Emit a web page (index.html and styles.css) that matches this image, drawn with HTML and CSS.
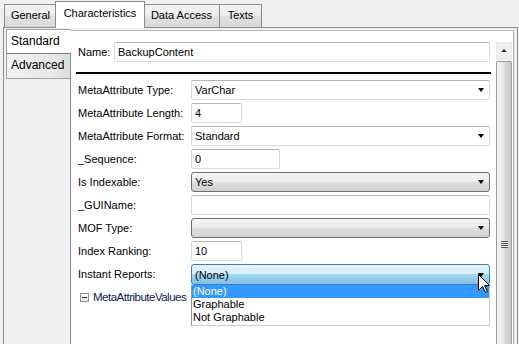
FILE: index.html
```html
<!DOCTYPE html>
<html lang="en">
<head>
    <meta charset="UTF-8">
    <title>Characteristics</title>
    <link rel="stylesheet" href="styles.css">
</head>
<body>
    <div class="tabs">
        <div class="tab tab-general">General</div>
        <div class="tab tab-active">Characteristics</div>
        <div class="tab tab-data">Data Access</div>
        <div class="tab tab-texts">Texts</div>
    </div>

    <div class="panel">
        <div class="side">
            <div class="vtab vtab-active">Standard</div>
            <div class="vtab">Advanced</div>
        </div>

        <div class="content">
            <div class="form">
                <div class="name-row">
                    <span class="name-label">Name:</span>
                    <div class="field name-field">BackupContent</div>
                </div>
                <div class="rule"></div>

                <div class="grid">
                    <span>MetaAttribute Type:</span>
                    <div class="field combo">VarChar<span class="arrow"></span></div>

                    <span>MetaAttribute Length:</span>
                    <div class="field short">4</div>

                    <span>MetaAttribute Format:</span>
                    <div class="field combo">Standard<span class="arrow"></span></div>

                    <span>_Sequence:</span>
                    <div class="field medium">0</div>

                    <span>Is Indexable:</span>
                    <div class="button-combo">Yes<span class="arrow"></span></div>

                    <span>_GUIName:</span>
                    <div class="field"></div>

                    <span>MOF Type:</span>
                    <div class="button-combo"><span></span><span class="arrow"></span></div>

                    <span>Index Ranking:</span>
                    <div class="field short">10</div>

                    <span>Instant Reports:</span>
                    <div class="dd-wrap">
                        <div class="button-combo hot">(None)<span class="arrow"></span></div>
                        <ul class="dropdown">
                            <li class="selected">(None)</li>
                            <li>Graphable</li>
                            <li>Not Graphable</li>
                        </ul>
                        <!-- mouse pointer -->
                        <svg class="cursor" width="13" height="20" viewBox="0 0 13 20">
                            <path d="M0.5 0.5 L0.5 16.5 L4.5 12.5 L7.5 18.5 L9.5 17.5 L6.5 11.5 L11.5 11.5 Z" fill="#fff" stroke="#000" stroke-width="1"/>
                        </svg>
                    </div>
                </div>

                <div class="group">
                    <span class="expander"></span>
                    <span class="group-title">MetaAttributeValues</span>
                </div>
            </div>

            <div class="scrollbar">
                <div class="sb-up"><span class="sb-arrow"></span></div>
                <div class="sb-thumb"><div class="grip"></div></div>
            </div>
        </div>
    </div>
</body>
</html>
```

FILE: styles.css
```css
html, body {
    margin: 0;
    height: 100%;
    overflow: hidden;
}

body {
    font-family: 'Liberation Sans', Arial, sans-serif;
    font-size: 11px;
    color: #000;
    background: #f0f0f0;
}

/* top tab strip */
.tabs {
    display: flex;
    align-items: flex-end;
    height: 27px;
    padding-left: 4px;
    box-sizing: border-box;
}

.tab {
    height: 23px;
    line-height: 21px;
    text-align: center;
    border: 1px solid #898c95;
    border-bottom: none;
    border-right: none;
    box-sizing: border-box;
    background: linear-gradient(#f3f3f3, #ececec 50%, #e1e1e1 50%, #d9d9d9);
}

.tab-general {
    width: 52px;
}

.tab-data {
    width: 75px;
}

.tab-texts {
    width: 43px;
    border-right: 1px solid #898c95;
}

.tab-active {
    position: relative;
    z-index: 2;
    width: 90px;
    height: 27px;
    line-height: 22px;
    margin: 0 -1px -1px -1px;
    background: #fff;
    border-right: 1px solid #898c95;
}

.tab-active + .tab {
    border-left: none;
}

/* main panel */
.panel {
    display: flex;
    margin-left: 3px;
    width: 515px;
    height: 330px;
    box-sizing: border-box;
    padding: 0 4px 0 2px;
    border: 1px solid #898c95;
    border-bottom: none;
    background: #f0f0f0;
}

.side {
    width: 64px;
    flex-shrink: 0;
    padding-top: 1px;
}

.vtab {
    height: 25px;
    line-height: 23px;
    padding-left: 4px;
    border-left: 1px solid #a0a0a0;
    border-bottom: 1px solid #a0a0a0;
    box-sizing: border-box;
    background: linear-gradient(to right, #f2f2f2, #e8e8e8 70%, #dcdcdc);
    font-size: 12px;
}

.vtab-active {
    position: relative;
    z-index: 1;
    margin-right: -1px;
    height: 25px;
    border-top: 1px solid #a0a0a0;
    border-bottom: 1px solid #7a7a7a;
    background: #fff;
}

.content {
    flex: 1;
    display: flex;
    margin-top: 2px;
    background: #fff;
    border-left: 1px solid #8a8a8a;
    border-top: 1px solid #b8b8b8;
    border-right: 1px solid #a8a8a8;
}

.form {
    flex: 1;
    padding: 11px 5px 0 7px;
    position: relative;
}

.name-row {
    display: flex;
    align-items: center;
}

.name-label {
    width: 36px;
}

.name-field {
    width: 376px;
}

.rule {
    margin: 10px 0 0 -2px;
    width: 415px;
    height: 2px;
    background: #000;
}

/* editors */
.grid {
    display: grid;
    grid-template-columns: 113px 299px;
    grid-auto-rows: 20px;
    row-gap: 3px;
    align-items: center;
    margin-top: 6px;
}

.field {
    height: 20px;
    line-height: 18px;
    padding-left: 3px;
    box-sizing: border-box;
    border: 1px solid #d6d9de;
    border-top-color: #b2b5bb;
    border-radius: 2px;
    background: #fff;
}

.short {
    width: 51px;
}

.medium {
    width: 89px;
}

.combo,
.button-combo {
    display: flex;
    justify-content: space-between;
    align-items: center;
    padding-right: 5px;
}

.button-combo {
    height: 20px;
    box-sizing: border-box;
    padding-left: 3px;
    border: 1px solid #707070;
    border-radius: 3px;
    background: linear-gradient(#f4f4f4, #ebebeb 50%, #dedede 50%, #d2d2d2);
}

.button-combo.hot {
    height: 21px;
    border-color: #3c7fb1;
    background: linear-gradient(#e8f5fc, #d4eefb 50%, #a6d7f1 50%, #7ec0e3);
}

.arrow {
    width: 0;
    height: 0;
    border-left: 3.5px solid transparent;
    border-right: 3.5px solid transparent;
    border-top: 4px solid #000;
}

.dd-wrap {
    position: relative;
    height: 21px;
    margin-top: 1px;
}

.dropdown {
    position: absolute;
    z-index: 3;
    top: 21px;
    left: 0;
    width: 299px;
    box-sizing: border-box;
    margin: 0;
    padding: 0;
    list-style: none;
    background: #fff;
    border: 1px solid #c9ced6;
    border-left-color: #8f96a0;
    border-top: none;
}

.dropdown li {
    height: 13px;
    line-height: 13px;
    padding-left: 1px;
}

.dropdown li.selected {
    background: #3399ff;
    color: #fff;
}

.dropdown li:last-child {
    margin-bottom: 1px;
}

.cursor {
    position: absolute;
    z-index: 4;
    left: 287px;
    top: 10px;
}

/* collapsible group */
.group {
    display: flex;
    align-items: center;
    margin-top: 6px;
    height: 14px;
    padding-left: 2px;
}

.expander {
    position: relative;
    width: 9px;
    height: 9px;
    box-sizing: border-box;
    border: 1px solid #919191;
    background: linear-gradient(#fff, #e6e6e6);
    margin-right: 4px;
}

.expander::after {
    content: "";
    position: absolute;
    left: 1px;
    top: 3px;
    width: 5px;
    height: 1px;
    background: #222;
}

.group-title {
    color: #101850;
    font-size: 11.5px;
    letter-spacing: -0.5px;
}

/* vertical scrollbar */
.scrollbar {
    width: 16px;
    margin: 11px 1px 0 0;
    display: flex;
    flex-direction: column;
    background: #f2f2f2;
}

.sb-up {
    height: 17px;
    display: flex;
    align-items: center;
    justify-content: center;
    background: #f0f0f0;
    border: 1px solid #e6e6e6;
    box-sizing: border-box;
}

.sb-arrow {
    width: 0;
    height: 0;
    border-left: 3px solid transparent;
    border-right: 3px solid transparent;
    border-bottom: 3px solid #333;
}

.sb-thumb {
    flex: 1;
    margin-top: 2px;
    border: 1px solid #9c9c9c;
    border-radius: 2px;
    background: linear-gradient(to right, #f6f6f6, #e9e9e9 45%, #d6d6d6 60%, #c9c9c9);
}

.grip {
    width: 7px;
    height: 7px;
    margin: 179px auto 0;
    background: repeating-linear-gradient(#5a5a5a 0 1px, #eeeeee 1px 2px);
}
```
